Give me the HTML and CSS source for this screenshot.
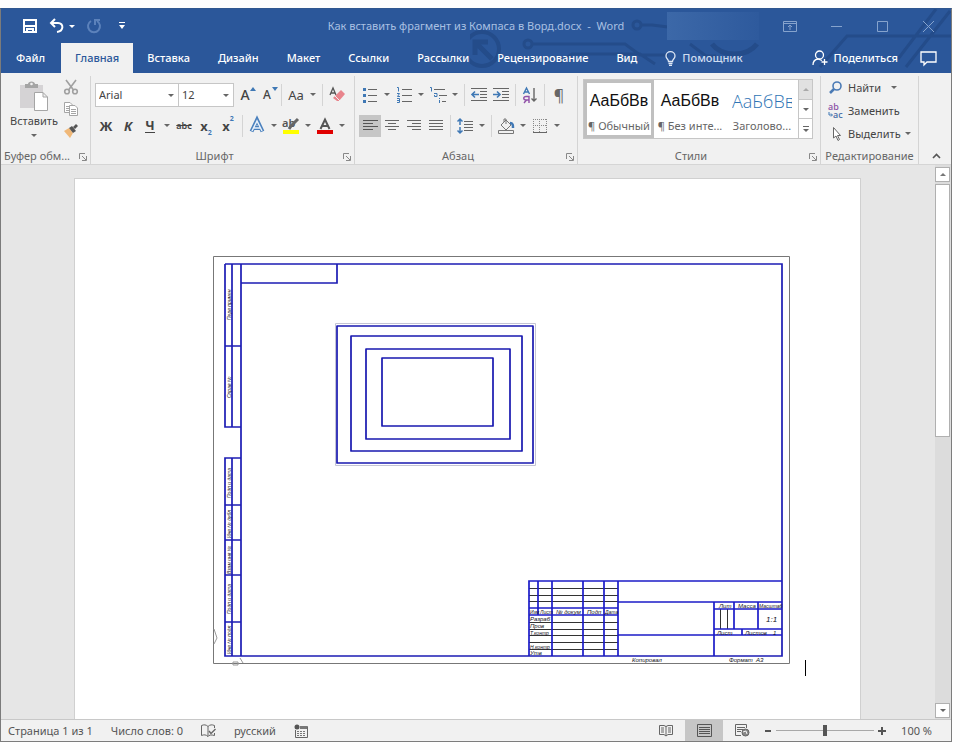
FILE: index.html
```html
<!DOCTYPE html>
<html lang="ru">
<head>
    <meta charset="UTF-8">
    <meta name="viewport" content="width=device-width, initial-scale=1.0">
    <title>Как вставить фрагмент из Компаса в Ворд.docx - Word</title>
    <link rel="stylesheet" href="styles.css">
</head>
<body>
    <div class="window">
        <header class="header">
            <svg class="circuit" width="481" height="65" viewBox="470 8 481 65" fill="none" stroke="#244c8a" stroke-width="3">
                <circle cx="482" cy="48" r="17" stroke-width="4"/>
                <path d="M492 58L477 43M475 54V41H488" stroke-width="5"/>
                <circle cx="528" cy="43" r="4"/>
                <path d="M532 43H625L640 54H668M560 61L572 53H640L655 63"/>
                <circle cx="637" cy="24" r="4"/>
                <path d="M641 24H652L668 26M690 43L706 55H716"/>
                <path d="M712 43A26 20 0 0 0 757 43" stroke-width="5"/>
                <path d="M820 66L847 35H951M898 58L936 8M906 66L950 10"/>
            </svg>
            <div class="titlebar">
                <div class="quick-access">
                    <button class="quick" aria-label="Сохранить">
                        <svg width="16" height="16" viewBox="0 0 16 16" fill="none" stroke="#fff" stroke-width="2"><path d="M2 2H14V14H2ZM2 8H14M5 14V11H11V14"/></svg>
                    </button>
                    <button class="quick" aria-label="Отменить">
                        <svg width="16" height="16" viewBox="0 0 16 16" fill="none" stroke="#fff" stroke-width="2"><path d="M6 1L2 5L6 9M2 5H9C15 5 15 13 8 14"/></svg>
                        <span class="caret"></span>
                    </button>
                    <button class="quick" aria-label="Повторить">
                        <svg width="16" height="16" viewBox="0 0 16 16" fill="none" stroke="#5c82bb" stroke-width="2"><path d="M5 3A6 6 0 1 0 11 3M9 7V2H14"/></svg>
                    </button>
                    <button class="quick" aria-label="Настройка панели">
                        <svg width="8" height="8" viewBox="0 0 8 8" fill="#fff"><path d="M1 0H7V1H1ZM1 3H7L4 7Z"/></svg>
                    </button>
                </div>
                <div class="title">Как вставить фрагмент из Компаса в Ворд.docx&nbsp; -&nbsp; Word</div>
                <div class="window-controls">
                    <span class="account"></span>
                    <button aria-label="Параметры ленты"><svg width="14" height="11" viewBox="0 0 14 11"><path d="M.5 .5H13.5V10.5H.5ZM1 2.500H13M7 9V4M5 6L7 4L9 6"/></svg></button>
                    <button aria-label="Свернуть"><svg width="11" height="11" viewBox="0 0 11 11"><path d="M0 5.500H11"/></svg></button>
                    <button aria-label="Развернуть"><svg width="11" height="11" viewBox="0 0 11 11"><path d="M.5 .5H10.500V10.500H.5Z"/></svg></button>
                    <button aria-label="Закрыть"><svg width="11" height="11" viewBox="0 0 11 11"><path d="M0 0L11 11M11 0L0 11"/></svg></button>
                </div>
            </div>
            <nav class="tabs">
                <button class="tab file">Файл</button>
                <button class="tab active">Главная</button>
                <button class="tab">Вставка</button>
                <button class="tab">Дизайн</button>
                <button class="tab">Макет</button>
                <button class="tab">Ссылки</button>
                <button class="tab">Рассылки</button>
                <button class="tab">Рецензирование</button>
                <button class="tab">Вид</button>
                <button class="tab assistant">
                    <svg width="11" height="15" viewBox="0 0 11 15" fill="none" stroke="#dfe8f5" stroke-width="1.300"><path d="M3.500 10.500C3.500 8 1 8 1 5A4.500 4.300 0 0 1 10 5C10 8 7.500 8 7.500 10.500ZM3.500 12.500H7.500M4 14.300H7"/></svg>
                    Помощник
                </button>
                <button class="tab share">
                    <svg width="16" height="16" viewBox="0 0 16 16" fill="none" stroke="#fff" stroke-width="1.300"><circle cx="7.500" cy="5" r="4"/><path d="M1 15C1 11 3 9.500 6 9L10 10.500M12.500 9V15M9.500 12H15.500"/></svg>
                    Поделиться
                </button>
                <button class="tab comment" aria-label="Комментарии">
                    <svg width="17" height="15" viewBox="0 0 17 15" fill="none" stroke="#fff" stroke-width="1.300"><path d="M1 1H16V11H7L4 14V11H1Z"/></svg>
                </button>
            </nav>
        </header>

        <div class="ribbon">
            <section class="group clipboard">
                <div class="group-body">
                    <button class="paste">
                        <svg width="30" height="32" viewBox="0 0 30 32"><path fill="#d5d3d5" d="M1 4H24V27H1Z"/><path fill="#a5a5a5" d="M6 7V3H9C9-.5 16-.5 16 3H19V7Z"/><circle cx="12.500" cy="3" r="1.300" fill="#f1f1f1"/><path fill="#fff" stroke="#a5a5a5" d="M15.500 11.500H24L28.500 16V29.500H15.500ZM24 11.500V16H28.500"/></svg>
                        Вставить
                        <span class="caret"></span>
                    </button>
                    <div class="clip-tools">
                        <button class="tool" aria-label="Вырезать"><svg width="16" height="16" viewBox="0 0 16 16" fill="none" stroke="#a0a0a0" stroke-width="1.600"><path d="M3 1L10.500 11M13 1L5.500 11"/><circle cx="4" cy="12.500" r="2.300"/><circle cx="12" cy="12.500" r="2.300"/></svg></button>
                        <button class="tool" aria-label="Копировать"><svg width="16" height="16" viewBox="0 0 16 16" fill="#fff" stroke="#a5a5a5"><path d="M1.500 1.500H7L9.500 4V11.500H1.500ZM3 5.500H7M3 7.500H7M3 9.500H7"/><path d="M6.500 4.500H12L14.500 7V14.500H6.500ZM8 8.500H13M8 10.500H13M8 12.500H13"/></svg></button>
                        <button class="tool" aria-label="Формат по образцу"><svg width="16" height="16" viewBox="0 0 16 16"><path fill="#f0b878" d="M1 8L6 5L10 10L7 15Z"/><path fill="#555" d="M6 5L9 3L13 8L10 10ZM10 4L13 1L15 3L12 6Z"/></svg></button>
                    </div>
                </div>
                <div class="group-label">Буфер обм...<button class="launcher" aria-label="Буфер обмена"><svg width="8" height="8" viewBox="0 0 8 8"><path d="M.5 6V.5H6M3 3L7 7M7.500 3V7.500H3"/></svg></button></div>
            </section>

            <section class="group font">
                <div class="group-body rows">
                    <div class="row">
                        <label class="combo family"><select aria-label="Шрифт"><option>Arial</option></select><span class="caret"></span></label>
                        <label class="combo size"><select aria-label="Размер шрифта"><option>12</option></select><span class="caret"></span></label>
                        <button class="tool" aria-label="Увеличить размер"><span class="glyph">A</span><svg class="up" width="6" height="4" viewBox="0 0 6 4"><path fill="#3f78b5" d="M0 4L3 0L6 4Z"/></svg></button>
                        <button class="tool" aria-label="Уменьшить размер"><span class="glyph small">A</span><svg class="up" width="6" height="4" viewBox="0 0 6 4"><path fill="#3f78b5" d="M0 0L3 4L6 0Z"/></svg></button>
                        <span class="sep"></span>
                        <button class="drop" aria-label="Регистр"><span class="glyph case">Aa</span><span class="caret"></span></button>
                        <span class="sep"></span>
                        <button class="tool" aria-label="Очистить формат"><svg width="16" height="16" viewBox="0 0 16 16"><path d="M1 8L4 1L7 8M2 6H6" fill="none" stroke="#555" stroke-width="1.300"/><path fill="#e8848c" d="M7 8L12 3L16 7L10 14H8L4 11Z"/><path d="M6 9L11 14" stroke="#f1f1f1"/></svg></button>
                    </div>
                    <div class="row">
                        <button class="tool bold">Ж</button>
                        <button class="tool italic">К</button>
                        <button class="drop underline"><span>Ч</span><span class="caret"></span></button>
                        <button class="tool strike">abc</button>
                        <button class="tool index">x<sub>2</sub></button>
                        <button class="tool index">x<sup>2</sup></button>
                        <span class="sep"></span>
                        <button class="drop" aria-label="Текстовые эффекты"><svg width="16" height="16" viewBox="0 0 16 16" fill="none"><path d="M2.500 13.500L8 2L13.500 13.500M4.500 10H11.500" stroke="#4a80bd" stroke-width="4"/><path d="M3 13L8 3L13 13M4.500 10H11.500" stroke="#e8f0fa" stroke-width="1.500"/></svg><span class="caret"></span></button>
                        <button class="drop" aria-label="Цвет выделения"><svg width="18" height="16" viewBox="0 0 18 16"><text x="0" y="9" class="marker">ab</text><path d="M16 1L9 8L7 11" stroke="#666" stroke-width="3" fill="none"/><path fill="#ff0" d="M1 12H17V16H1Z"/></svg><span class="caret"></span></button>
                        <button class="drop" aria-label="Цвет текста"><svg width="16" height="16" viewBox="0 0 16 16"><path d="M3.500 11L8 1.500L12.500 11M5 8H11" stroke="#555" stroke-width="2" fill="none"/><path fill="#e00000" d="M0 12H16V16H0Z"/></svg><span class="caret"></span></button>
                    </div>
                </div>
                <div class="group-label">Шрифт<button class="launcher" aria-label="Шрифт, параметры"><svg width="8" height="8" viewBox="0 0 8 8"><path d="M.5 6V.5H6M3 3L7 7M7.500 3V7.500H3"/></svg></button></div>
            </section>

            <section class="group paragraph">
                <div class="group-body rows">
                    <div class="row">
                        <button class="drop" aria-label="Маркеры"><svg width="14" height="16" viewBox="0 0 14 16"><path fill="#3f78b5" d="M0 1H3V4H0ZM0 7H3V10H0ZM0 13H3V16H0Z"/><path stroke="#666" d="M5 2.500H14M5 8.500H14M5 14.500H14"/></svg><span class="caret"></span></button>
                        <button class="drop" aria-label="Нумерация"><svg width="15" height="16" viewBox="0 0 15 16"><path fill="none" stroke="#3f78b5" d="M0 .5H1.500V4.500M0 6.500H2.500L.5 9.500H3M0 11.500H2.500V15.500H0M0 13.500H2"/><path stroke="#666" d="M5 2.500H15M5 8.500H15M5 14.500H15"/></svg><span class="caret"></span></button>
                        <button class="drop" aria-label="Многоуровневый список"><svg width="17" height="16" viewBox="0 0 17 16"><path fill="none" stroke="#3f78b5" d="M0 .5H1.500V4.500M4 6.500H7V9.500H4.500V8M9.500 11V12M9.500 13V16"/><path stroke="#666" d="M4 2.500H15M9 8.500H17M12 14.500H16"/></svg><span class="caret"></span></button>
                        <span class="sep"></span>
                        <button class="tool" aria-label="Уменьшить отступ"><svg width="16" height="14" viewBox="0 0 16 14"><path stroke="#666" d="M0 .5H16M9 3.500H16M9 6.500H16M9 9.500H16M0 12.500H16"/><path stroke="#3f78b5" stroke-width="1.600" fill="none" d="M8 6.500H1M4 3.500L1 6.500L4 9.500"/></svg></button>
                        <button class="tool" aria-label="Увеличить отступ"><svg width="16" height="14" viewBox="0 0 16 14"><path stroke="#666" d="M0 .5H16M9 3.500H16M9 6.500H16M9 9.500H16M0 12.500H16"/><path stroke="#3f78b5" stroke-width="1.600" fill="none" d="M0 6.500H7M4 3.500L7 6.500L4 9.500"/></svg></button>
                        <span class="sep"></span>
                        <button class="tool" aria-label="Сортировка"><svg width="14" height="16" viewBox="0 0 14 16" fill="none" stroke-width="1.400"><path stroke="#3f78b5" d="M.5 7L3.500 1L6.500 7M1.500 5H5.500"/><path stroke="#9050a8" d="M6 16V9.500H3C0 9.500 0 13 3 13H6M3.500 13L1 16"/><path stroke="#666" d="M11 1V14M8.500 11.500L11 14L13.500 11.500"/></svg></button>
                        <span class="sep"></span>
                        <button class="tool pilcrow" aria-label="Знаки абзаца">¶</button>
                    </div>
                    <div class="row">
                        <button class="tool pressed" aria-label="По левому краю"><svg width="15" height="12" viewBox="0 0 15 12"><path stroke="#555" d="M0 .5H15M0 3.500H10M0 6.500H15M0 9.500H10"/></svg></button>
                        <button class="tool" aria-label="По центру"><svg width="14" height="12" viewBox="0 0 14 12"><path stroke="#666" d="M0 .5H14M3 3.500H11M0 6.500H14M3 9.500H11"/></svg></button>
                        <button class="tool" aria-label="По правому краю"><svg width="14" height="12" viewBox="0 0 14 12"><path stroke="#666" d="M0 .5H14M5 3.500H14M0 6.500H14M5 9.500H14"/></svg></button>
                        <button class="tool" aria-label="По ширине"><svg width="14" height="12" viewBox="0 0 14 12"><path stroke="#666" d="M0 .5H14M0 3.500H14M0 6.500H14M0 9.500H14"/></svg></button>
                        <span class="sep"></span>
                        <button class="drop" aria-label="Интервал"><svg width="16" height="16" viewBox="0 0 16 16" fill="none"><path stroke="#666" d="M7 3.500H16M7 6.500H16M7 9.500H16M7 12.500H16"/><path stroke="#3f78b5" stroke-width="1.500" d="M3 1V7M.5 3.500L3 1L5.500 3.500M3 9V15M.5 12.500L3 15L5.500 12.500"/></svg><span class="caret"></span></button>
                        <span class="sep"></span>
                        <button class="drop" aria-label="Заливка"><svg width="17" height="16" viewBox="0 0 17 16" fill="none" stroke="#777"><path d="M3 7L8 2L13 7L8 12ZM6 4V1H8V6M.5 12.500H15.500V15.500H.5Z"/><path d="M12 5C15 5 15 7 15 10" stroke="#3f78b5" stroke-width="2.500"/></svg><span class="caret"></span></button>
                        <button class="drop" aria-label="Границы"><svg width="14" height="14" viewBox="0 0 14 14" fill="none" stroke="#888"><path stroke-dasharray="1 1" d="M.5 0V13M13.500 0V13M6.500 0V13M0 .5H14M0 6.500H14"/><path stroke="#666" d="M0 13.500H14"/></svg><span class="caret"></span></button>
                    </div>
                </div>
                <div class="group-label">Абзац<button class="launcher" aria-label="Абзац, параметры"><svg width="8" height="8" viewBox="0 0 8 8"><path d="M.5 6V.5H6M3 3L7 7M7.500 3V7.500H3"/></svg></button></div>
            </section>

            <section class="group styles">
                <div class="group-body">
                    <div class="gallery">
                        <button class="style selected"><span class="sample">АаБбВв</span><span>¶ Обычный</span></button>
                        <button class="style"><span class="sample">АаБбВв</span><span>¶ Без инте...</span></button>
                        <button class="style"><span class="sample heading">АаБбВв</span><span>Заголово...</span></button>
                        <div class="gallery-scroll">
                            <button class="off" aria-label="Вверх"><span class="caret up-caret"></span></button>
                            <button aria-label="Вниз"><span class="caret"></span></button>
                            <button class="more" aria-label="Ещё"><span class="caret"></span></button>
                        </div>
                    </div>
                </div>
                <div class="group-label">Стили<button class="launcher" aria-label="Стили, параметры"><svg width="8" height="8" viewBox="0 0 8 8"><path d="M.5 6V.5H6M3 3L7 7M7.500 3V7.500H3"/></svg></button></div>
            </section>

            <section class="group editing">
                <div class="group-body edit-list">
                    <button><svg width="16" height="14" viewBox="0 0 16 14" fill="none" stroke="#4a7ab5"><circle cx="9" cy="5" r="4" stroke-width="1.600"/><path d="M6 8L2 12" stroke-width="2.500"/></svg>Найти<span class="caret wide"></span></button>
                    <button><svg width="16" height="16" viewBox="0 0 16 16"><text x="0" y="7" class="replace">ab</text><text x="5" y="15" class="replace to">ac</text><path d="M1 9V12H4M3 10.500L4.500 12L3 13.500" stroke="#3f78b5" fill="none"/></svg>Заменить</button>
                    <button><svg width="16" height="16" viewBox="0 0 16 16" fill="#fff" stroke="#666"><path d="M5.500 1.500V12L8 10L10 14.500L11.500 13.500L9.500 9.500H12.500Z"/></svg>Выделить<span class="caret"></span></button>
                </div>
                <div class="group-label">Редактирование</div>
            </section>

            <button class="collapse" aria-label="Свернуть ленту"><svg width="9" height="6" viewBox="0 0 9 6"><path d="M1 5L4.500 1.500L8 5" fill="none" stroke="#555" stroke-width="1.600"/></svg></button>
        </div>

        <div class="workspace">
            <div class="canvas">
                <div class="page">
                    <svg class="drawing" viewBox="213 256 577 408" fill="none">
                        <!-- лист -->
                        <path stroke="#777" stroke-width="1" d="M213.500 256.500H789.500V663.500H213.500Z"/>
                        <path stroke="#999" stroke-width="1" d="M214 629L217 638L214 644M233 662H238V665H233ZM240 658L243 663"/>
                        <!-- рамка и боковые графы -->
                        <g stroke="#1c1cb4" stroke-width="1.700">
                            <path d="M225 264H782V656H225V458H241M241 264V656M241 283H337V264M225 264V427H241M225 346H241M232 264V427M232 458V656M225 505H241M225 540H241M225 575H241M225 622H241"/>
                        </g>
                        <!-- вложенные прямоугольники -->
                        <path stroke="#c4c4d4" stroke-width="1" d="M335.500 323.500H535.500V465.500H335.500Z"/>
                        <path stroke="#1818b0" stroke-width="1.700" d="M337 326H533V463H337ZM351 336H522V451H351ZM366 349H510V439H366ZM382 358H493V426H382Z" stroke-linejoin="round"/>
                        <!-- основная надпись -->
                        <path stroke="#333" stroke-width="1" d="M529 588.500H618M529 595.500H618M529 601.500H618M529 622.500H618M529 629.500H618M529 635.500H618M529 642.500H618M529 649.500H618M720.500 609V629M727.500 609V629"/>
                        <path stroke="#1c1cc8" stroke-width="1.700" d="M529 656V581H782M618 581V656M538 581V615M552 581V656M583 581V656M604 581V656M529 608H618M529 615H618M618 602H782M618 635H782M714 602V656M714 609H782M714 629H782M734 602V629M758 602V629M742 629V635"/>
                        <g class="gost">
                            <text x="530" y="614" class="tight">Изм</text>
                            <text x="540" y="614" class="tight">Лист</text>
                            <text x="556" y="614">№ докум</text>
                            <text x="587" y="614">Подп</text>
                            <text x="605" y="614" class="tight">Дата</text>
                            <text x="530" y="621">Разраб</text>
                            <text x="530" y="628">Пров</text>
                            <text x="530" y="635" class="tight">Т.контр</text>
                            <text x="530" y="649" class="tight">Н.контр</text>
                            <text x="530" y="655">Утв</text>
                            <text x="719" y="608">Лит</text>
                            <text x="738" y="608">Масса</text>
                            <text x="759" y="608" class="tight">Масштаб</text>
                            <text x="766" y="622" class="scale">1:1</text>
                            <text x="717" y="635">Лист</text>
                            <text x="745" y="635">Листов</text>
                            <text x="773" y="635">1</text>
                            <text x="632" y="662">Копировал</text>
                            <text x="729" y="662">Формат</text>
                            <text x="756" y="662">А3</text>
                            <text transform="translate(231 320) rotate(-90)" class="tight">Перв примен</text>
                            <text transform="translate(231 398) rotate(-90)" class="tight">Справ №</text>
                            <text transform="translate(231 498) rotate(-90)" class="tight">Подп и дата</text>
                            <text transform="translate(231 538) rotate(-90)" class="tight">Инв № дубл</text>
                            <text transform="translate(231 574) rotate(-90)" class="tight">Взам инв №</text>
                            <text transform="translate(231 614) rotate(-90)" class="tight">Подп и дата</text>
                            <text transform="translate(231 654) rotate(-90)" class="tight">Инв № подл</text>
                        </g>
                    </svg>
                    <span class="cursor"></span>
                </div>
            </div>
            <div class="scrollbar">
                <button aria-label="Прокрутить вверх"><span class="caret up-caret"></span></button>
                <div class="thumb"></div>
                <button class="down" aria-label="Прокрутить вниз"><span class="caret"></span></button>
            </div>
        </div>

        <footer class="status">
            <span>Страница 1 из 1</span>
            <span>Число слов: 0</span>
            <svg width="15" height="14" viewBox="0 0 15 14" fill="none" stroke="#666"><path d="M7 2.500C5 .5 3 .5 .5 1.500V11.500C3 10.500 5 10.500 7 12.500V2.500C9 .5 11 .5 13.500 1.500V4M7 12.500C8 11 10 10.500 13.500 11.500V9"/><path d="M8 7L10 9.500L14.500 5" stroke-width="1.400"/></svg>
            <span>русский</span>
            <svg width="14" height="14" viewBox="0 0 14 14"><circle cx="3" cy="3" r="2.500" fill="#555"/><path d="M6 2.500H13.500V13.500H1.500V6" fill="none" stroke="#666"/><path d="M6 2H13V5H6Z" fill="#777"/><path d="M3 7.500H12M3 9.500H12M3 11.500H12" stroke="#777" stroke-dasharray="2 1"/></svg>
            <div class="views">
                <button aria-label="Режим чтения"><svg width="14" height="13" viewBox="0 0 14 13" fill="none" stroke="#666"><path d="M.5 1.500H5L7 2.500L9 1.500H13.500V10.500H9L7 12L5 10.500H.5ZM7 2V12M2 4H5M2 6H5M2 8H5M9 4H12M9 6H12M9 8H12"/></svg></button>
                <button class="current" aria-label="Разметка страницы"><svg width="15" height="13" viewBox="0 0 15 13" fill="none" stroke="#555"><path d="M.5 .5H14.500V12.500H.5ZM2 3.500H13M2 5.500H13M2 7.500H13M2 9.500H13"/></svg></button>
                <button aria-label="Веб-документ"><svg width="15" height="13" viewBox="0 0 15 13" fill="none" stroke="#666"><path d="M6 11.500H.5V.5H11.500V4M2 3.500H10M2 5.500H8M2 7.500H6"/><circle cx="10.500" cy="8.500" r="3.500" fill="#888"/><path stroke="#f1f1f1" d="M8 8L11 7L12 10"/></svg></button>
            </div>
            <div class="zoom">
                <button aria-label="Уменьшить"><svg width="8" height="8" viewBox="0 0 8 8"><path d="M1 4H7" stroke="#555" stroke-width="2"/></svg></button>
                <input type="range" min="0" max="100" value="50" aria-label="Масштаб">
                <button aria-label="Увеличить"><svg width="8" height="8" viewBox="0 0 8 8"><path d="M0 4H8M4 0V8" stroke="#555" stroke-width="2"/></svg></button>
            </div>
            <span class="percent">100 %</span>
        </footer>
    </div>
</body>
</html>
```

FILE: styles.css
```css
* {
    box-sizing: border-box;
}

body {
    margin: 0;
    background: #fdfdfd;
    font-family: "Noto Sans", "Open Sans", sans-serif;
    font-size: 11px;
    line-height: 16px;
    color: #444;
}

button {
    padding: 0;
    border: none;
    background: none;
    font: inherit;
    color: inherit;
    display: flex;
    align-items: center;
    justify-content: center;
    white-space: nowrap;
}

svg {
    display: block;
    flex: none;
    overflow: visible;
}

.window {
    margin: 8px 8px 8px 0;
    min-height: calc(100vh - 16px);
    display: flex;
    flex-direction: column;
    border: 1px solid #7b7b7b;
    border-top-color: #2f568f;
    background: #f1f1f1;
}

/* header */
.header {
    position: relative;
    background: #2b579a;
    color: #fff;
}

.circuit {
    position: absolute;
    top: 0;
    right: 0;
    overflow: hidden;
}

.titlebar {
    position: relative;
    display: grid;
    grid-template-columns: 1fr auto 1fr;
    align-items: center;
    height: 34px;
}

.quick-access {
    display: flex;
    align-items: center;
    gap: 10px;
    padding-left: 20px;
}

.quick {
    gap: 4px;
    min-width: 18px;
}

.quick .caret {
    border-top-color: #fff;
}

.title {
    color: #a9c0e2;
}

.window-controls {
    display: flex;
    justify-content: flex-end;
    align-items: center;
}

.window-controls button {
    width: 46px;
    height: 30px;
}

.window-controls path {
    fill: none;
    stroke: #86a3cd;
}

.account {
    width: 92px;
    height: 28px;
    margin-right: 8px;
    background: linear-gradient(90deg, #3c68a8, #2e5a9d);
}

.tabs {
    position: relative;
    display: flex;
    height: 30px;
}

.tab {
    padding: 0 14px;
    font-weight: 500;
}

.tab.file {
    padding: 0 16px 0 15px;
}

.tab.active {
    background: #f1f1f1;
    color: #2b579a;
}

.assistant {
    gap: 6px;
    color: #cfdcf0;
}

.share {
    gap: 6px;
    margin-left: auto;
}

.tab.comment {
    padding: 0 14px 0 8px;
}

/* ribbon */
.caret {
    width: 0;
    height: 0;
    border: 3px solid transparent;
    border-top-color: #666;
    border-bottom: none;
}

.up-caret {
    border-top: none;
    border-bottom: 3px solid #777;
}

.ribbon {
    display: flex;
    height: 92px;
    border-bottom: 1px solid #d5d5d5;
}

.group {
    flex: none;
    display: flex;
    flex-direction: column;
    margin-top: 3px;
    border-right: 1px solid #d4d4d4;
}

.clipboard {
    width: 90px;
}

.font {
    width: 264px;
}

.paragraph {
    width: 223px;
}

.styles {
    flex: 1;
    min-width: 0;
}

.editing {
    width: 98px;
}

.group-body {
    flex: 1;
    display: flex;
    padding: 0 4px;
}

.rows {
    flex-direction: column;
    gap: 8px;
    padding-top: 7px;
}

.row {
    display: flex;
    align-items: center;
    height: 23px;
}

.group-label {
    position: relative;
    height: 16px;
    padding-right: 16px;
    text-align: center;
    color: #666;
    white-space: nowrap;
}

.clipboard .group-label {
    padding-left: 3px;
    text-align: left;
}

.editing .group-label {
    padding-right: 0;
}

.launcher {
    position: absolute;
    right: 3px;
    top: 5px;
}

.launcher path {
    fill: none;
    stroke: #888;
}

.tool {
    position: relative;
    width: 22px;
    height: 22px;
}

.drop {
    width: 34px;
    height: 22px;
    display: grid;
    grid-template-columns: 22px 12px;
    justify-items: center;
}

.pressed {
    background: #c6c6c6;
}

.sep {
    width: 1px;
    height: 22px;
    margin: 0 3px;
    background: #d4d4d4;
}

.paste {
    flex-direction: column;
    justify-content: flex-start;
    width: 58px;
    padding-top: 5px;
}

.paste .caret {
    margin-top: 5px;
}

.clip-tools {
    display: flex;
    flex-direction: column;
}

.clip-tools .tool {
    width: 16px;
}

.combo {
    position: relative;
    height: 24px;
    border: 1px solid #c6c6c6;
    background: #fff;
}

.combo.family {
    width: 84px;
}

.combo.size {
    width: 55px;
    border-left: none;
}

.combo select {
    appearance: none;
    width: 100%;
    height: 22px;
    padding: 0 3px;
    border: none;
    background: none;
    font: inherit;
    color: #444;
}

.combo .caret {
    position: absolute;
    right: 4px;
    top: 10px;
}

.glyph {
    font-size: 14px;
    font-weight: 500;
}

.glyph.small {
    font-size: 12px;
}

.glyph.case {
    font-size: 13px;
    font-weight: 400;
}

.up {
    position: absolute;
    right: 0;
    top: 3px;
}

.bold,
.italic,
.underline,
.index {
    font-size: 13px;
    font-weight: 700;
}

.italic {
    font-style: italic;
}

.underline span:first-child {
    border-bottom: 1px solid #444;
    line-height: 14px;
}

.strike {
    font-size: 9px;
    font-weight: 600;
    text-decoration: line-through;
}

.index sub,
.index sup {
    font-size: 7px;
    line-height: 8px;
    color: #3f78b5;
}

.index sub {
    align-self: flex-end;
}

.index sup {
    align-self: flex-start;
}

.marker {
    font-size: 11px;
    font-weight: 600;
    fill: #555;
}

.pilcrow {
    font-size: 16px;
    color: #666;
}

.gallery {
    flex: 1;
    min-width: 0;
    display: flex;
    height: 60px;
    margin: 3px 3px 0 1px;
    border: 1px solid #c6c6c6;
    background: #fff;
}

.style {
    flex: 1;
    flex-direction: column;
    justify-content: flex-end;
    min-width: 0;
    padding: 4px;
    gap: 9px;
    color: #666;
}

.style.selected {
    padding: 0 0 1px;
    border: 3px solid #c0c0c0;
}

.sample {
    font-family: "Liberation Sans", Arial, sans-serif;
    font-size: 16px;
    color: #111;
}

.sample.heading {
    width: 60px;
    overflow: hidden;
    font-family: "Open Sans", sans-serif;
    font-size: 18px;
    font-weight: 300;
    text-align: left;
    color: #2e74b5;
}

.gallery-scroll {
    display: flex;
    flex-direction: column;
    width: 14px;
    border-left: 1px solid #c6c6c6;
}

.gallery-scroll button {
    flex: 1;
    border-bottom: 1px solid #c6c6c6;
}

.gallery-scroll .off {
    background: #e1e1e1;
}

.gallery-scroll .off .caret {
    border-bottom-color: #aaa;
}

.gallery-scroll .more {
    flex-direction: column;
    gap: 2px;
    border-bottom: none;
}

.more::before {
    content: "";
    width: 6px;
    height: 1px;
    background: #666;
}

.edit-list {
    flex-direction: column;
    padding: 0 4px;
}

.edit-list button {
    height: 23px;
    justify-content: flex-start;
    gap: 4px;
    padding-left: 3px;
}

.edit-list .wide {
    margin-left: 6px;
}

.replace {
    font-size: 9px;
    font-weight: 500;
    fill: #8a4fa5;
}

.replace.to {
    fill: #3f68a5;
}

.collapse {
    width: 9px;
    height: 10px;
    margin: auto 10px 3px 13px;
}

/* document */
.workspace {
    flex: 1;
    display: flex;
    background: #e6e6e6;
}

.canvas {
    flex: 1;
    display: flex;
    padding: 13px 74px 0 73px;
}

.page {
    flex: 1;
    display: flex;
    align-items: flex-start;
    gap: 15px;
    padding: 77px 54px 54px 138px;
    border: 1px solid #d0d0d0;
    border-bottom: none;
    background: #fff;
}

.drawing {
    flex: 1;
    min-width: 0;
}

.gost {
    font-family: "Liberation Sans", Arial, sans-serif;
    font-size: 6px;
    font-style: italic;
    fill: #112;
}

.gost .tight {
    font-size: 5px;
}

.gost .scale {
    font-size: 8px;
}

.cursor {
    align-self: flex-end;
    width: 1px;
    height: 16px;
    margin-bottom: -11px;
    background: #000;
}

.scrollbar {
    display: flex;
    flex-direction: column;
    width: 16px;
    padding: 2px 1px 1px 0;
    background: #dcdcdc;
}

.scrollbar button {
    height: 15px;
    border: 1px solid #b0b0b0;
    background: #fff;
}

.thumb {
    height: 46%;
    margin-top: 2px;
    border: 1px solid #b0b0b0;
    background: #fff;
}

.scrollbar .down {
    margin-top: auto;
}

/* status bar */
.status {
    display: flex;
    align-items: center;
    gap: 18px;
    height: 22px;
    padding: 0 19px 0 7px;
    border-top: 1px solid #c8c8c8;
    color: #555;
    white-space: nowrap;
}

.views {
    display: flex;
    align-self: stretch;
    margin-left: auto;
}

.views button {
    width: 38px;
}

.views .current {
    background: #c6c6c6;
}

.zoom {
    display: flex;
    align-items: center;
    gap: 4px;
    margin-left: -15px;
}

.zoom input {
    appearance: none;
    width: 98px;
    height: 12px;
    margin: 0;
    background: linear-gradient(#a8a8a8, #a8a8a8) center / 100% 1px no-repeat;
}

.zoom input::-webkit-slider-thumb {
    appearance: none;
    width: 4px;
    height: 11px;
    background: #555;
}

.percent {
    margin-left: -3px;
}
```
